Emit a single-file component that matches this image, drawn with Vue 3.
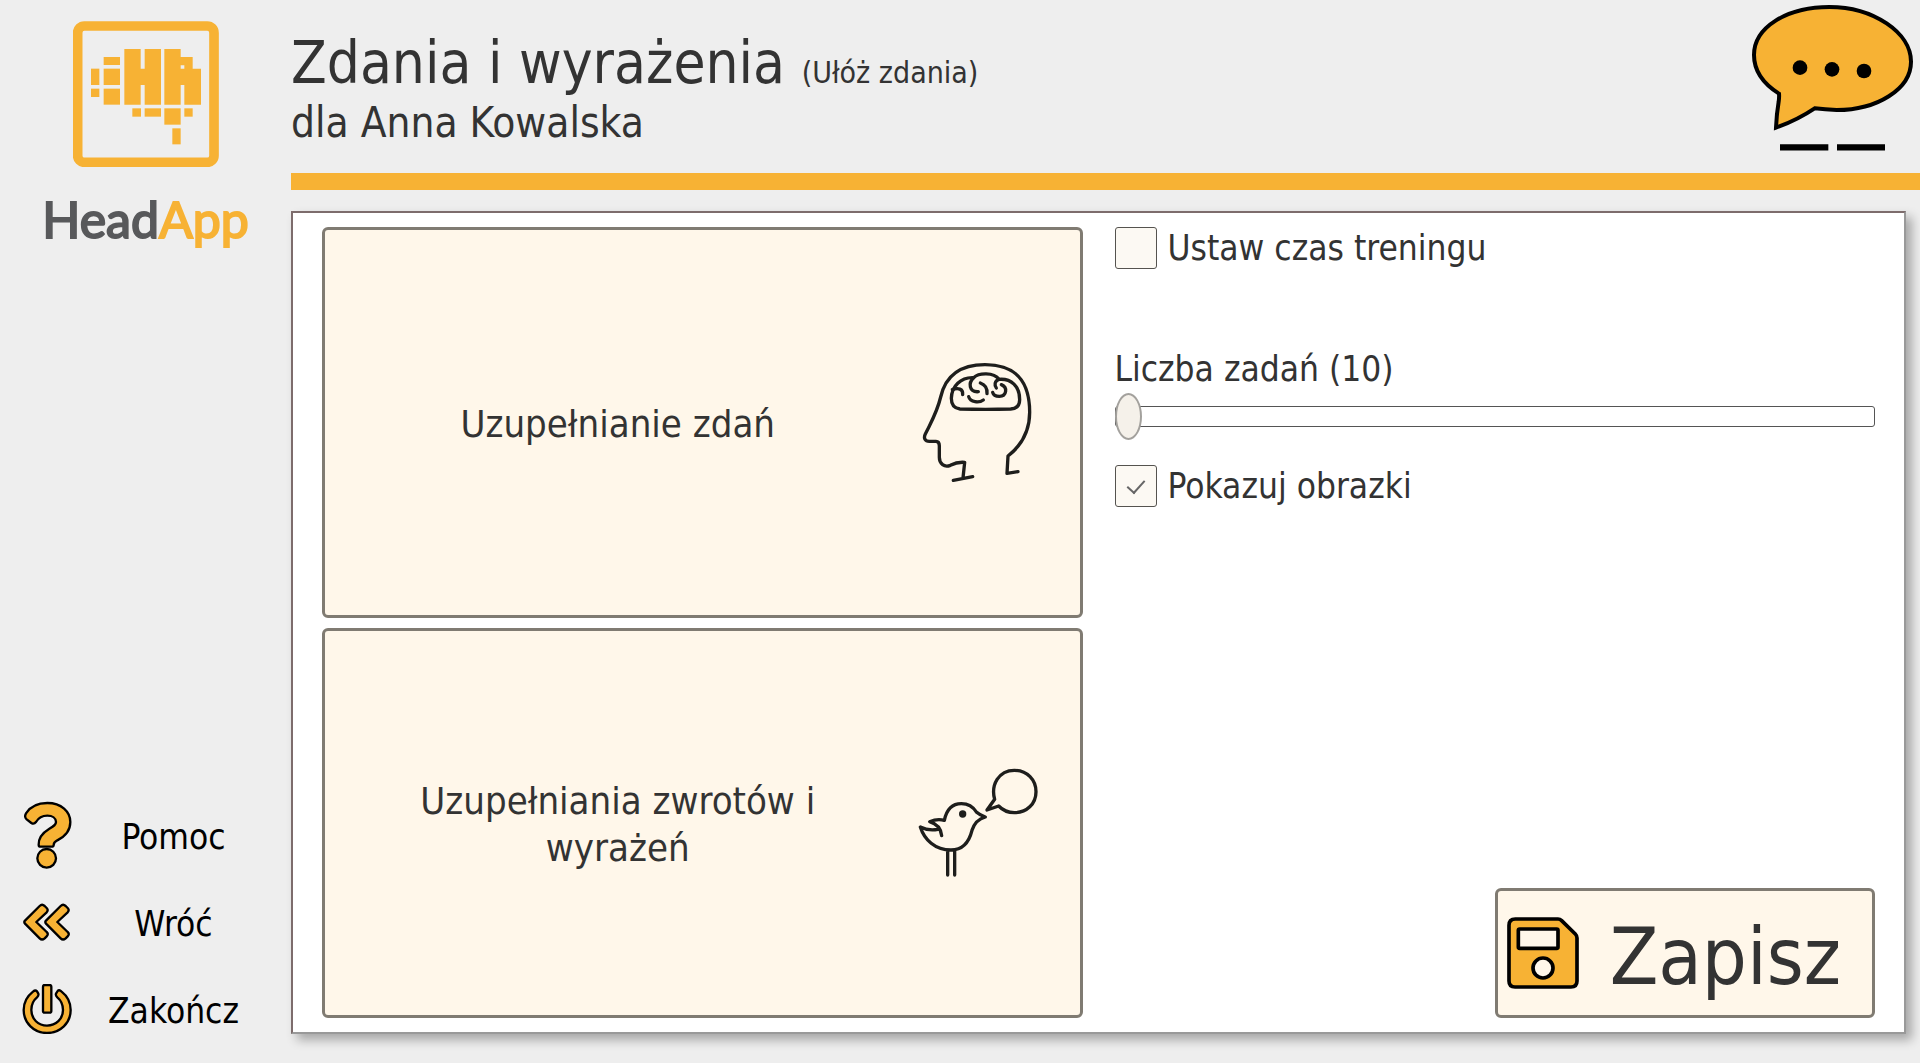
<template>
  <div class="page">
    <aside class="sidebar">
      <div class="logo">
        <svg class="logo-mark" viewBox="129 62 438 438" aria-hidden="true">
          <rect x="143" y="77" width="409" height="409" rx="20" fill="none" stroke="#f7b234" stroke-width="29" />
          <g fill="#f7b234">
            <rect x="183" y="205" width="25" height="49" />
            <rect x="183" y="265" width="25" height="25" />
            <rect x="221" y="170" width="49" height="24" />
            <rect x="221" y="205" width="49" height="49" />
            <rect x="221" y="265" width="49" height="48" />
            <path d="M283 146H332V205H344V146H393V313H344V254H332V313H283Z" />
            <path d="M403 146H452V170H488V205H513V313H463V254H452V313H403ZM452 195V205H463V195Z" fill-rule="evenodd" />
            <rect x="307" y="324" width="26" height="25" />
            <rect x="344" y="324" width="49" height="25" />
            <rect x="403" y="324" width="49" height="49" />
            <rect x="463" y="324" width="25" height="25" />
            <rect x="427" y="384" width="25" height="48" />
          </g>
        </svg>
        <div class="logo-text">Head<span>App</span></div>
      </div>

      <nav class="menu">
        <button type="button" class="menu-item">
          <svg viewBox="66 60 150 210" width="50" height="70" aria-hidden="true">
            <path d="M78 100C92 78 115 69 142 69C184 69 211 95 211 126C211 153 194 170 172 181C163 186 161 189 161 195Q161 200 155 200H122Q116 200 116 194C115 172 127 159 148 146C162 138 168 134 168 126C168 114 157 107 142 107C126 107 115 114 108 126Q102 134 94 129L80 118Q72 111 78 100Z" />
            <circle cx="140" cy="235" r="28" />
          </svg>
          <span>Pomoc</span>
        </button>
        <button type="button" class="menu-item">
          <svg viewBox="66 365 150 120" width="50" height="40" aria-hidden="true">
            <path d="M75 421L119 377Q126 370 134 377L140 383Q146 389 140 396L109 425L140 455Q147 461 140 468L134 474Q126 481 119 474L75 430Q71 425 75 421Z" />
            <path d="M138 421L182 377Q189 370 197 377L203 383Q209 389 203 396L172 425L203 455Q210 461 203 468L197 474Q189 481 182 474L138 430Q134 425 138 421Z" />
          </svg>
          <span>Wróć</span>
        </button>
        <button type="button" class="menu-item">
          <svg viewBox="64 609 150 150" width="50" height="50" aria-hidden="true">
            <path d="M97 632Q104 626 109 631L113 638Q115 643 109 649C98 658 92 671 92 687C92 714 113 734 139 734C166 734 187 714 187 687C187 671 181 658 170 649Q164 643 166 638L171 630Q175 625 182 631C200 645 210 664 210 687C210 726 179 756 139 756C100 756 69 726 69 687C69 664 79 646 97 632Z" />
            <rect x="127" y="612" width="25" height="83" rx="5" />
          </svg>
          <span>Zakończ</span>
        </button>
      </nav>
    </aside>

    <main class="main">
      <header class="header">
        <div>
          <h1>Zdania i wyrażenia <small>(Ułóż zdania)</small></h1>
          <p>dla Anna Kowalska</p>
        </div>
        <svg class="bubble" viewBox="93 9 492 450" aria-hidden="true">
          <path d="M177 281C128 250 102 210 102 165C102 82 200 21 328 21C460 21 573 98 573 185C573 268 470 330 350 330Q315 329 284 325Q232 360 168 383Q170 340 176 305Q178 290 177 281Z" fill="#f7b234" stroke="#000" stroke-width="12" />
          <circle cx="240" cy="203" r="22" />
          <circle cx="336" cy="208" r="22" />
          <circle cx="432" cy="213" r="22" />
          <path d="M180 442H325M351 442H495" stroke="#000" stroke-width="19" />
        </svg>
      </header>

      <section class="panel">
        <div class="cards">
          <button type="button" class="card">
            <span class="card-text">Uzupełnianie zdań</span>
            <svg class="card-icon" viewBox="54 65 360 360" aria-hidden="true">
              <path d="M160 420L218 409M189 413L194 366Q172 364 151 375C133 382 118 371 118 351V316Q118 303 108 303H88C75 303 70 293 76 281C98 236 111 216 122 170C137 105 180 73 255 73C350 73 389 125 389 216C389 274 365 315 324 347L321 399L354 394" />
              <path d="M180 206C160 204 154 192 154 174C155 138 182 110 221 112C236 97 281 95 297 117C334 114 359 138 359 178C359 196 348 205 332 206Q256 208 180 206Z" />
              <path d="M157 148C174 142 190 145 188 163M221 112C204 128 207 156 235 154M206 169C211 187 238 188 250 179M241 128Q263 136 261 160M297 117C283 121 283 136 289 143M304 133C324 141 320 168 298 168Q281 168 278 156" />
            </svg>
          </button>
          <button type="button" class="card">
            <span class="card-text">Uzupełniania zwrotów i wyrażeń</span>
            <svg class="card-icon" viewBox="54 39 360 360" aria-hidden="true">
              <path d="M133 211C140 178 158 161 184 161C208 161 223 176 230 187Q240 196 256 201Q226 209 216 241C206 281 187 300 153 300C105 300 73 269 61 231Q84 243 114 238M133 211Q112 205 89 215C112 222 123 236 125 257M143 302V375M164 302V375" />
              <path d="M284 148C272 105 296 61 343 61C382 61 408 90 408 125C408 162 380 188 343 188Q315 188 296 168L261 180Z" />
              <circle cx="188" cy="192" r="11" class="solid" />
            </svg>
          </button>
        </div>

        <form class="settings" @submit.prevent>
          <label class="check time-check">
            <input type="checkbox" v-model="limitTime" />
            <span>Ustaw czas treningu</span>
          </label>
          <label class="range-label" for="tasks">Liczba zadań ({{ tasks }})</label>
          <input id="tasks" class="range" type="range" min="10" max="50" v-model="tasks" />
          <label class="check">
            <input type="checkbox" v-model="showImages" />
            <span>Pokazuj obrazki</span>
          </label>

          <button type="submit" class="save">
            <svg viewBox="81 142 216 216" width="72" height="72" aria-hidden="true">
              <path d="M106 148H234Q240 148 245 153L286 193Q291 198 291 205V334Q291 352 273 352H105Q87 352 87 334V167Q87 148 106 148Z" fill="#f7b234" />
              <rect x="115" y="178" width="119" height="58" rx="4" fill="#fff7ea" />
              <circle cx="189" cy="295" r="30" fill="#fff7ea" />
            </svg>
            <span>Zapisz</span>
          </button>
        </form>
      </section>
    </main>
  </div>
</template>

<script setup>
import { ref } from 'vue'

const limitTime = ref(false)
const showImages = ref(true)
const tasks = ref(10)
</script>

<style>
body {
  margin: 0;
  background: #eee;
}
</style>

<style scoped>
.page {
  display: flex;
  min-height: 100vh;
  overflow: hidden;
  background: #eee;
  color: #333;
  font-family: "DejaVu Sans Condensed", "DejaVu Sans", sans-serif;
  font-size: 35px;
  line-height: 42px;
}

.page *,
.page {
  box-sizing: border-box;
}

button {
  font: inherit;
  color: inherit;
  cursor: pointer;
}

.sidebar {
  width: 291px;
  flex-shrink: 0;
  display: flex;
  flex-direction: column;
  justify-content: space-between;
  padding: 21px 0 11px;
}

.logo {
  display: flex;
  flex-direction: column;
  align-items: center;
  gap: 22px;
}

.logo-mark {
  width: 146px;
  height: 146px;
}

.logo-text {
  font-family: Lato, sans-serif;
  font-size: 50px;
  line-height: 60px;
  color: #58595b;
  -webkit-text-stroke: 2px currentColor;
  stroke-linejoin: round;
}

.logo-text span {
  color: #f7b234;
}

.menu-item {
  display: flex;
  align-items: center;
  width: 100%;
  height: 87px;
  padding: 0 16px 0 22px;
  border: 0;
  background: none;
  color: #000;
}

.menu-item svg {
  fill: #f7b234;
  stroke: #000;
  stroke-width: 7px;
  stroke-linejoin: round;
}

.menu-item span {
  flex: 1;
  padding-top: 4px;
}

.main {
  flex: 1;
  min-width: 0;
  display: flex;
  flex-direction: column;
}

.header {
  display: flex;
  justify-content: space-between;
  align-items: flex-start;
  height: 190px;
  padding-right: 5px;
  border-bottom: 17px solid #f7b234;
}

.header h1 {
  margin: 28px 0 0;
  font-size: 58px;
  font-weight: 400;
  line-height: 70px;
}

.header small {
  font-size: 30px;
  line-height: 1;
}

.header p {
  margin: 0;
  font-size: 42px;
  line-height: 50px;
}

.bubble {
  width: 164px;
  height: 150px;
  margin-top: 3px;
}

.panel {
  flex: 1;
  display: grid;
  grid-template-columns: 1fr 1fr;
  gap: 32px;
  margin: 21px 14px 29px 0;
  padding: 14px 29px;
  border: 2px solid #999;
  border-top-color: #7d6c6c;
  border-left-color: #7d6c6c;
  background: #fff;
  box-shadow: 6px 6px 10px rgba(0, 0, 0, 0.3);
}

.cards {
  display: grid;
  grid-template-rows: 1fr 1fr;
  gap: 10px;
}

.card,
.save {
  display: flex;
  align-items: center;
  border: 3px solid #807b72;
  border-radius: 6px;
  background: #fff7ea;
}

.card {
  padding: 0 42px 0 0;
  font-size: 38px;
  line-height: 47px;
}

.card-text {
  flex: 1;
  padding: 4px 80px 0 73px;
}

.card-icon {
  width: 120px;
  height: 120px;
  flex-shrink: 0;
  fill: none;
  stroke: #1e1e1c;
  stroke-width: 10px;
  stroke-linecap: round;
  stroke-linejoin: round;
}

.card-icon .solid {
  fill: #1e1e1c;
  stroke: none;
}

.settings {
  display: flex;
  flex-direction: column;
  min-width: 0;
}

.check {
  display: flex;
  align-items: center;
  gap: 11px;
}

.time-check {
  margin-bottom: 79px;
}

.check input {
  appearance: none;
  display: grid;
  place-items: center;
  width: 42px;
  height: 42px;
  margin: 0;
  border: 1px solid #55534f;
  border-radius: 3px;
  background: #fcf9f3;
}

.check input:checked::after {
  content: "";
  width: 8px;
  height: 15px;
  margin-top: -4px;
  border: solid #666;
  border-width: 0 2px 2px 0;
  transform: rotate(42deg);
}

.range {
  appearance: none;
  width: 100%;
  height: 47px;
  margin: 3px 0 25px;
  background: none;
}

.range::-webkit-slider-runnable-track {
  height: 21px;
  border: 1px solid #555;
  border-radius: 3px;
  background: #fff;
}

.range::-webkit-slider-thumb {
  appearance: none;
  width: 27px;
  height: 47px;
  margin: -14px 0 0 -1px;
  border: 2px solid #a3a19d;
  border-radius: 50%;
  background: #f5f1ea;
}

.save {
  align-self: flex-end;
  width: 50%;
  height: 130px;
  margin-top: auto;
  padding: 0 0 0 9px;
  font-size: 79px;
  line-height: 94px;
}

.save svg {
  stroke: #000;
  stroke-width: 11px;
}

.save span {
  flex: 1;
  padding-top: 8px;
}
</style>
